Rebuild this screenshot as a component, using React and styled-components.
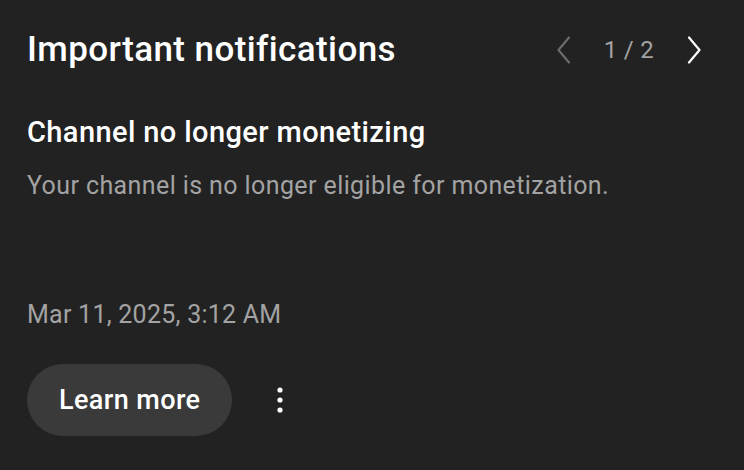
import styled, { createGlobalStyle } from 'styled-components';

const GlobalStyle = createGlobalStyle`
  html, body {
    margin: 0;
    padding: 0;
    background: #222222;
  }
  body {
    font-family: Roboto, "Noto Sans", Arial, sans-serif;
    -webkit-font-smoothing: antialiased;
  }
`;

const Card = styled.section`
  box-sizing: border-box;
  width: 744px;
  height: 470px;
  padding: 27px 27px 0 27px;
  background: #222222;
  color: #fff;
  display: flex;
  flex-direction: column;
`;

const Header = styled.header`
  display: flex;
  align-items: center;
  justify-content: space-between;
  height: 46px;
`;

const Title = styled.h1`
  margin: 0;
  font-size: 35px;
  line-height: 46px;
  font-weight: 500;
  letter-spacing: 0.4px;
`;

const Pager = styled.div`
  display: flex;
  align-items: center;
  gap: 21px;
  margin-right: 2px;
`;

const PageText = styled.span`
  font-size: 24px;
  letter-spacing: 0.3px;
  color: #a3a3a3;
  min-width: 48px;
  text-align: center;
`;

const ArrowButton = styled.button`
  width: 40px;
  height: 40px;
  padding: 0;
  border: none;
  background: transparent;
  display: flex;
  align-items: center;
  justify-content: center;
  color: ${({ disabled }) => (disabled ? '#6b6b6b' : '#ffffff')};
`;

const Heading = styled.h2`
  margin: 41px 0 0;
  font-size: 29px;
  line-height: 36px;
  font-weight: 500;
  letter-spacing: 0.4px;
`;

const Text = styled.p`
  margin: ${({ gap }) => gap}px 0 0;
  font-size: 25px;
  line-height: 32px;
  letter-spacing: ${({ spacing }) => spacing ?? 0.4}px;
  color: #a3a3a3;
`;

const Actions = styled.div`
  display: flex;
  align-items: center;
  gap: 26px;
  margin-top: 33px;
`;

const PillButton = styled.button`
  height: 72px;
  padding: 0 32px;
  border: none;
  border-radius: 36px;
  background: #3a3a3a;
  color: #fff;
  font-family: inherit;
  font-size: 27px;
  font-weight: 500;
  letter-spacing: 0.4px;
`;

const MoreButton = styled.button`
  width: 44px;
  height: 44px;
  padding: 0;
  border: none;
  background: transparent;
  display: flex;
  align-items: center;
  justify-content: center;
`;

const Chevron = ({ dir }) => (
  <svg width="24" height="28" viewBox="0 0 24 28" fill="none">
    <path
      d={dir === 'left' ? 'M18 1.5 L7.5 14 L18 26.5' : 'M6 1.5 L16.5 14 L6 26.5'}
      stroke="currentColor"
      strokeWidth="2.2"
      strokeLinecap="round"
      strokeLinejoin="round"
    />
  </svg>
);

export default function App() {
  return (
    <>
      <GlobalStyle />
      <Card>
        <Header>
          <Title>Important notifications</Title>
          <Pager>
            <ArrowButton disabled aria-label="Previous">
              <Chevron dir="left" />
            </ArrowButton>
            <PageText>1 / 2</PageText>
            <ArrowButton aria-label="Next">
              <Chevron dir="right" />
            </ArrowButton>
          </Pager>
        </Header>
        <Heading>Channel no longer monetizing</Heading>
        <Text gap={20}>Your channel is no longer eligible for monetization.</Text>
        <Text gap={97} spacing={0.25}>Mar 11, 2025, 3:12 AM</Text>
        <Actions>
          <PillButton>Learn more</PillButton>
          <MoreButton aria-label="More">
            <svg width="6" height="26" viewBox="0 0 6 26">
              <circle cx="3" cy="3" r="2.6" fill="#fff" />
              <circle cx="3" cy="13" r="2.6" fill="#fff" />
              <circle cx="3" cy="23" r="2.6" fill="#fff" />
            </svg>
          </MoreButton>
        </Actions>
      </Card>
    </>
  );
}
